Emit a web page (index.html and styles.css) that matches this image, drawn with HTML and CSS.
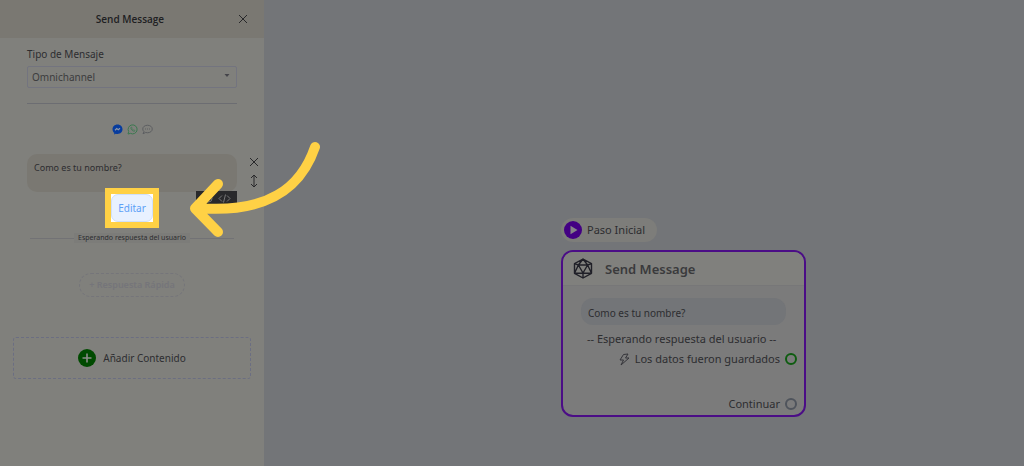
FILE: index.html
```
<!DOCTYPE html>
<html lang="es">
<head>
<meta charset="utf-8">
<title>Send Message</title>
<link rel="stylesheet" href="styles.css">
</head>
<body>
<div class="app">
  <aside class="sidebar">
    <header class="sidebar-header">
      <h1 class="title">Send Message</h1>
      <button class="icon-button close" aria-label="Cerrar">
        <svg width="10" height="10" viewBox="0 0 10 10"><path d="M1 1l8 8M9 1l-8 8"/></svg>
      </button>
    </header>
    <div class="form">
      <label class="label" for="tipo">Tipo de Mensaje</label>
      <div class="select-wrap">
        <select class="select" id="tipo"><option>Omnichannel</option></select>
        <svg class="caret" width="6" height="4" viewBox="0 0 6 4"><path d="M.5 0h5L3 3z"/></svg>
      </div>
      <hr class="rule">
      <div class="channels">
        <svg width="11" height="11" viewBox="0 0 22 22"><path fill="#073c9e" d="M11 1C5 1 1 5.300 1 10.500c0 3 1.300 5.500 3.400 7.200V21l3.200-1.600c1 .3 2.200.5 3.400.5 6 0 10-4.200 10-9.400S17 1 11 1z"/><path d="M6 12.500l3.500-3.500 3 2.500L16 8.500" fill="none" stroke="#8e98a8" stroke-width="2.200"/></svg>
        <svg width="11" height="11" viewBox="0 0 22 22" fill="none" stroke="#3b7950" stroke-width="2"><path d="M2 20l1.400-4.800A9 9 0 1 1 7 18.700z"/><path d="M7.500 7c-.5 3.500 4 8 7.500 7.800l.8-2-2.400-1.200-1.300 1.100c-1.400-.7-2.300-1.600-2.900-2.900l1-1.200L9.200 6z" stroke-width="1.300"/></svg>
        <svg width="11" height="11" viewBox="0 0 22 22" fill="none" stroke="#5c5e61" stroke-width="2"><path d="M11 2.500c5.500 0 9.500 3.200 9.500 7.500s-4 7.500-9.500 7.500c-1.300 0-2.500-.2-3.600-.5L2 19.500l2-4.300C2.400 13.800 1.500 12 1.500 10c0-4.300 4-7.500 9.500-7.500z"/><path d="M6 10h2M10 10h2M14 10h2" stroke-width="2.200"/></svg>
      </div>
    </div>
    <section class="message">
      <div class="message-box">
        <p class="bubble">Como es tu nombre?</p>
        <div class="highlight"><button class="edit">Editar</button></div>
        <div class="toolbar">
          <svg width="11" height="9" viewBox="0 0 22 18"><circle cx="11" cy="9" r="7"/></svg>
          <svg width="13" height="9" viewBox="0 0 26 18"><path d="M8 3L2 9l6 6M18 3l6 6-6 6M15 1l-4 16"/></svg>
        </div>
      </div>
      <div class="message-actions">
        <button class="icon-button" aria-label="Eliminar">
          <svg width="10" height="10" viewBox="0 0 10 10"><path d="M1 1l8 8M9 1l-8 8"/></svg>
        </button>
        <button class="icon-button" aria-label="Mover">
          <svg width="10" height="14" viewBox="0 0 10 14"><path d="M5 1v12M2 4l3-3 3 3M2 10l3 3 3-3"/></svg>
        </button>
      </div>
    </section>
    <div class="divider"><span>Esperando respuesta del usuario</span></div>
    <button class="quick">+ Respuesta Rápida</button>
    <button class="add">
      <svg width="18" height="18" viewBox="0 0 18 18"><circle cx="9" cy="9" r="9" fill="#004a00"/><path d="M9 4.500v9M4.500 9h9" stroke="#8b8c88" stroke-width="1.600"/></svg>
      Añadir Contenido
    </button>
  </aside>
  <main class="canvas">
    <div class="flow">
      <div class="start">
        <svg width="18" height="18" viewBox="0 0 18 18"><circle cx="9" cy="9" r="9" fill="#430083"/><path d="M6.500 4.800l7 4.200-7 4.200z" fill="#858287"/></svg>
        Paso Inicial
      </div>
      <article class="card">
        <header class="card-header">
          <svg width="20" height="21" viewBox="0 0 20 21" fill="none" stroke="#202028" stroke-width="1.400" stroke-linejoin="round"><path d="M10 1l8.500 4.700v9.600L10 20l-8.500-4.700V5.700zM5.400 7h9.200L10 15zM10 1L5.400 7 1.500 15.300 10 15l8.500.3L14.600 7zM1.500 5.700L5.400 7M18.500 5.700L14.600 7M10 15v5"/></svg>
          <h2 class="card-title">Send Message</h2>
        </header>
        <div class="card-body">
          <p class="card-bubble">Como es tu nombre?</p>
          <p class="waiting">-- Esperando respuesta del usuario --</p>
          <div class="output">
            <svg width="11" height="13" viewBox="0 0 11 13" fill="none" stroke="#35353a" stroke-linejoin="round"><path d="M4.500 1.500L9 1 6.500 5H10L2 12l2.500-5H1z"/></svg>
            <span>Los datos fueron guardados</span><i class="port port-ok"></i>
          </div>
          <div class="output output-next"><span>Continuar</span><i class="port"></i></div>
        </div>
      </article>
    </div>
  </main>
  <svg class="pointer" width="136" height="100" viewBox="188 140 136 100"><path d="M315 147C301 188 268 214 197 208M218 184l-23 24.500 23 23.500"/></svg>
</div>
</body>
</html>
```
FILE: styles.css
```
* { box-sizing: border-box; }
body { margin: 0; font-family: "Noto Sans", sans-serif; font-size: 10px; line-height: 16px; color: #2d2d30; }
h1, h2, p { margin: 0; font-weight: 400; }
button, select { font: inherit; color: inherit; }
button { padding: 0; border: 0; background: none; }
svg { display: block; flex: none; }
.app { position: relative; display: flex; min-height: 100vh; overflow: hidden; background: #737578; }
.sidebar { flex: none; width: 264px; background: #80807c; }
.sidebar-header { display: flex; align-items: center; height: 38px; padding: 0 16px; background: #7a7872; }
.title { flex: 1; padding-left: 6px; text-align: center; font-family: "Open Sans", sans-serif; font-size: 10px; font-weight: 600; color: #202022; }
.icon-button svg { fill: none; stroke: #28282a; }
.form { padding: 8px 27px 0; }
.label { display: block; height: 20px; }
.select-wrap { position: relative; }
.select { display: block; width: 100%; height: 22px; padding: 0 4px; appearance: none; border: 1px solid #73747f; border-radius: 2px; background: transparent; color: #3c3c3e; }
.caret { position: absolute; right: 7px; top: 8px; fill: #44444a; }
.rule { margin: 15px 0 0; border: 0; border-top: 1px solid #6c6d72; }
.channels { display: flex; justify-content: center; gap: 4px; padding-top: 20px; }
.message { display: flex; gap: 12px; padding: 19px 5px 0 27px; }
.message-box { position: relative; flex: 1; }
.bubble { height: 38px; padding: 6px 7px; border-radius: 10px; background: #7a7872; font-size: 9px; }
.highlight { position: absolute; left: 78px; top: 34px; display: flex; padding: 6px; width: 54px; height: 40px; background: #ffd145; }
.highlight::before { content: ""; position: absolute; inset: 6px; background: #fff; }
.edit { position: relative; flex: 1; border: 1px solid #cfe0fa; border-radius: 7px; background: #e8f1ff; color: #5ba0f7; }
.toolbar { position: absolute; right: 0; top: 37px; display: flex; align-items: center; justify-content: flex-end; gap: 4px; width: 41px; height: 15px; padding-right: 6px; background: #29292b; fill: none; stroke: #777; stroke-width: 2; }
.message-actions { display: flex; flex-direction: column; gap: 7px; width: 10px; padding-top: 3px; }
.divider { display: flex; align-items: center; margin: 41px 30px 0; font-size: 7px; line-height: 10px; }
.divider::before, .divider::after { content: ""; flex: 1; border-top: 1px solid #727275; }
.divider span { padding: 0 4px; background: #7c7c79; }
.quick { display: block; width: 106px; height: 24px; margin: 30px auto 0; border: 1px dashed #75757a; border-radius: 12px; color: #75757a; font-size: 9px; font-weight: 600; }
.add { display: flex; align-items: center; justify-content: center; gap: 7px; width: 238px; height: 42px; margin: 40px auto 0; border: 1px dashed #6b6e82; border-radius: 3px; }
.canvas { position: relative; flex: 1; }
.flow { position: absolute; left: 297px; top: 218px; width: 245px; }
.start { display: flex; align-items: center; gap: 5px; width: fit-content; height: 24px; padding: 0 12px 0 3px; margin-bottom: 8px; border-radius: 12px; background: #7d7d7a; font-size: 11px; }
.card { border: 2px solid #4b0d86; border-radius: 12px; background: #7b7b7b; overflow: hidden; }
.card-header { display: flex; align-items: center; gap: 12px; height: 34px; padding: 0 10px; border-bottom: 1px solid #777778; background: #80807d; }
.card-title { font-size: 13px; font-weight: 600; color: #3a3a3c; }
.card-body { padding: 12px 7px 1px 18px; }
.card-bubble { height: 27px; margin-right: 11px; padding: 7px; border-radius: 12px; background: #737578; font-size: 10px; }
.waiting { margin-top: 6px; padding-left: 6px; font-size: 11px; white-space: nowrap; }
.output { display: flex; align-items: center; justify-content: flex-end; gap: 5px; height: 20px; margin-top: 2px; font-size: 11px; white-space: nowrap; }
.output-next { margin-top: 25px; }
.port { flex: none; width: 12px; height: 12px; border: 2px solid #4f545c; border-radius: 50%; }
.port-ok { border-color: #0e5c10; }
.pointer { position: absolute; left: 188px; top: 140px; fill: none; stroke: #ffd145; stroke-width: 10; stroke-linecap: round; stroke-linejoin: round; }
```
